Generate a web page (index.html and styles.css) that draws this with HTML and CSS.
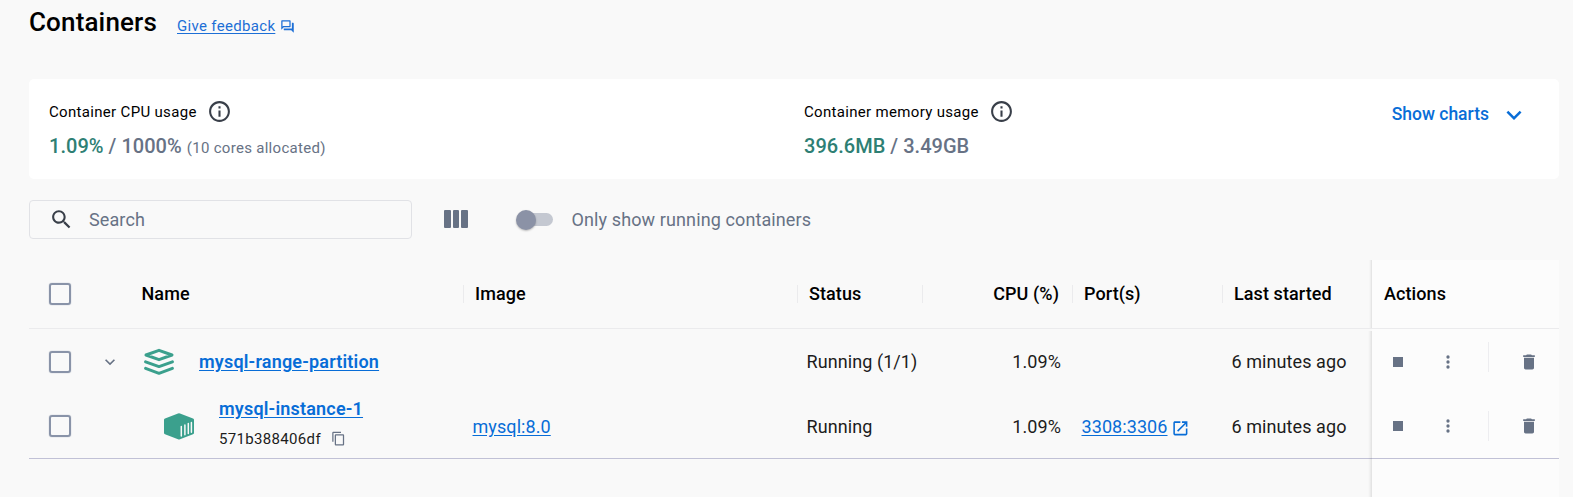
FILE: index.html
```html
<!DOCTYPE html>
<html lang="en">
<head>
<meta charset="utf-8">
<title>Containers</title>
<link rel="stylesheet" href="styles.css">
</head>
<body>
<svg class="defs" width="0" height="0">
  <symbol id="info" viewBox="0 0 24 24"><path d="M11 7h2v2h-2zm0 4h2v6h-2zm1-9C6.48 2 2 6.48 2 12s4.48 10 10 10 10-4.48 10-10S17.52 2 12 2zm0 18c-4.41 0-8-3.59-8-8s3.59-8 8-8 8 3.59 8 8-3.59 8-8 8z"/></symbol>
  <symbol id="down" viewBox="0 0 24 24"><path d="M7.41 8.59 12 13.17l4.59-4.58L18 10l-6 6-6-6z"/></symbol>
  <symbol id="more" viewBox="0 0 24 24"><circle cx="12" cy="6" r="2"/><circle cx="12" cy="12" r="2"/><circle cx="12" cy="18" r="2"/></symbol>
  <symbol id="trash" viewBox="0 0 24 24"><path d="M6 19c0 1.1.9 2 2 2h8c1.1 0 2-.9 2-2V7H6zM19 4h-3.5l-1-1h-5l-1 1H5v2h14z"/></symbol>
  <symbol id="stop" viewBox="0 0 24 24"><path d="M6 6h12v12H6z"/></symbol>
</svg>
<header class="title-bar">
  <h1>Containers</h1>
  <a class="feedback">Give feedback</a>
  <svg class="feedback-icon" viewBox="0 0 24 24"><path d="M15 4v7H5.17L4 12.17V4h11m1-2H3c-.55 0-1 .45-1 1v14l4-4h10c.55 0 1-.45 1-1V3c0-.55-.45-1-1-1zm5 4h-2v9H6v2c0 .55.45 1 1 1h11l4 4V7c0-.55-.45-1-1-1z"/></svg>
</header>
<section class="usage">
  <div class="metric cpu">
    <div class="label">Container CPU usage<svg><use href="#info"/></svg></div>
    <div class="value"><span class="used">1.09%</span> / 1000% <small>(10 cores allocated)</small></div>
  </div>
  <div class="metric">
    <div class="label">Container memory usage<svg><use href="#info"/></svg></div>
    <div class="value"><span class="used">396.6MB</span> / 3.49GB</div>
  </div>
  <a class="charts">Show charts<svg><use href="#down"/></svg></a>
</section>
<section class="toolbar">
  <div class="search">
    <svg viewBox="0 0 24 24"><path d="M15.5 14h-.79l-.28-.27C15.41 12.59 16 11.11 16 9.5 16 5.91 13.09 3 9.5 3S3 5.91 3 9.5 5.91 16 9.5 16c1.61 0 3.09-.59 4.23-1.57l.27.28v.79l5 4.99L20.49 19l-4.99-5zm-6 0C7.01 14 5 11.99 5 9.5S7.01 5 9.5 5 14 7.01 14 9.5 11.99 14 9.5 14z"/></svg>
    <span>Search</span>
  </div>
  <div class="columns"><i></i><i></i><i></i></div>
  <div class="switch"><div class="thumb"></div></div>
  <span class="switch-label">Only show running containers</span>
</section>
<main class="table">
  <div class="row head">
    <div class="cell name"><i class="box"></i><span class="head-name">Name</span></div>
    <div class="cell">Image</div>
    <div class="cell">Status</div>
    <div class="cell num">CPU (%)</div>
    <div class="cell">Port(s)</div>
    <div class="cell">Last started</div>
    <div class="cell pinned">Actions</div>
  </div>
  <div class="row group">
    <div class="cell name"><i class="box"></i><svg class="toggle"><use href="#down"/></svg>
      <svg class="stack" viewBox="0 0 30 28"><g fill="none" stroke="#3ba08d" stroke-width="3" stroke-linecap="round" stroke-linejoin="round"><path d="M15 2.3 28 7 15 11.7 2 7z"/><path d="M1.6 13.8 15 18.6l13.4-4.8"/><path d="M1.6 20.4 15 25.3l13.4-4.9"/></g></svg>
      <a class="link strong">mysql-range-partition</a></div>
    <div class="cell"></div>
    <div class="cell">Running (1/1)</div>
    <div class="cell num">1.09%</div>
    <div class="cell"></div>
    <div class="cell">6 minutes ago</div>
    <div class="cell pinned"><svg class="stop"><use href="#stop"/></svg><svg class="more"><use href="#more"/></svg><i class="rule"></i><svg class="trash"><use href="#trash"/></svg></div>
  </div>
  <div class="row item">
    <div class="cell name"><i class="box"></i>
      <svg class="cube" viewBox="0 0 30 27"><path d="M14 .5q1-.5 2 0L29 5.4q1 .4 1 1.3v13.2q0 .9-1 1.3L16 26.3q-1 .4-2 0L1 21.2q-1-.4-1-1.3V6.7q0-.9 1-1.3z" fill="#3ba08d"/><path d="M17.3 13.5v9.5M20.9 12v9.7M24.3 10.6v9.9M27.4 9.4v9.9" stroke="#f9f9f9" stroke-width="1.5" stroke-linecap="round"/></svg>
      <div class="ident"><a class="link strong">mysql-instance-1</a>
        <div class="hash">571b388406df<svg viewBox="0 0 24 24"><path d="M16 1H4c-1.1 0-2 .9-2 2v14h2V3h12zm3 4H8c-1.1 0-2 .9-2 2v14c0 1.1.9 2 2 2h11c1.1 0 2-.9 2-2V7c0-1.1-.9-2-2-2zm0 16H8V7h11z"/></svg></div></div></div>
    <div class="cell"><a class="link">mysql:8.0</a></div>
    <div class="cell">Running</div>
    <div class="cell num">1.09%</div>
    <div class="cell"><a class="link">3308:3306</a><svg class="open" viewBox="0 0 24 24"><path d="M19 19H5V5h7V3H5c-1.11 0-2 .9-2 2v14c0 1.1.89 2 2 2h14c1.1 0 2-.9 2-2v-7h-2zM14 3v2h3.59l-9.83 9.83 1.41 1.41L19 6.41V10h2V3z"/></svg></div>
    <div class="cell">6 minutes ago</div>
    <div class="cell pinned"><svg class="stop"><use href="#stop"/></svg><svg class="more"><use href="#more"/></svg><i class="rule"></i><svg class="trash"><use href="#trash"/></svg></div>
  </div>
  <div class="row rest"><div class="cell pinned"></div></div>
</main>
</body>
</html>
```
FILE: styles.css
```css
* { box-sizing: border-box; }
body { margin: 0; padding: 0 14px 0 29px; height: 497px; overflow: hidden; display: flex; flex-direction: column; background: #f9f9f9; color: #000; font: 18px/24px Roboto, sans-serif; }
svg { display: block; flex: none; fill: #677285; }
.defs { position: absolute; }

.title-bar { display: flex; height: 79px; padding-top: 4px; align-items: flex-start; }
h1 { margin: 0; font-size: 26px; line-height: 36px; font-weight: 500; width: 148px; letter-spacing: .15px; }
.feedback { margin-top: 10px; font-size: 15px; line-height: 24px; letter-spacing: .32px; color: #1d6fd6; text-decoration: underline; text-underline-offset: 2px; width: 103px; white-space: nowrap; }
.feedback-icon { width: 15px; height: 15px; margin-top: 15px; fill: #1d6fd6; }

.usage { display: flex; height: 100px; padding: 20px; background: #fff; border-radius: 5px; }
.metric.cpu { width: 755px; }
.label { display: flex; align-items: center; height: 25px; gap: 10px; font-size: 15px; letter-spacing: .32px; }
.label svg { width: 25px; height: 25px; fill: #393f49; }
.value { margin-top: 8px; font-size: 20px; line-height: 28px; font-weight: 500; color: #677285; letter-spacing: .03px; white-space: nowrap; }
.used { color: #2e7f74; }
.value small { font-size: 15px; font-weight: 400; letter-spacing: .3px; }
.charts { margin-left: auto; display: flex; height: 30px; gap: 10px; align-items: center; color: #086dd7; font-size: 17.5px; font-weight: 500; margin-right: 10px; }
.charts svg { width: 30px; height: 30px; fill: #086dd7; margin-top: 2px; }

.toolbar { display: flex; align-items: center; height: 39px; margin-top: 21px; color: #677285; letter-spacing: .11px; }
.search { display: flex; align-items: center; gap: 15px; width: 383px; height: 39px; padding-left: 19px; border: 1px solid #e1e2e6; border-radius: 4px; }
.search svg { width: 25px; height: 25px; fill: #393f49; }
.columns { display: flex; gap: 2px; margin-left: 32px; margin-top: -1px; }
.columns i { width: 6.7px; height: 18px; border-radius: 1px; background: #677285; }
.switch { margin-left: 51px; width: 34px; height: 13px; border-radius: 7px; background: #c4c8d1; display: flex; align-items: center; }
.thumb { width: 20px; height: 20px; flex: none; margin-left: -3px; border-radius: 50%; background: #8b92a6; box-shadow: 0 1px 2px rgba(0,0,0,.25); }
.switch-label { margin-left: 18.5px; }

.table { flex: 1; display: flex; flex-direction: column; margin-top: 21px; letter-spacing: .08px; }
.row { display: grid; grid-template-columns: 434px 334px 125px 150px 150px 150px 187px; height: 65px; color: #1c1c1c; }
.row.head { height: 69px; border-bottom: 1px solid #ebebed; color: #000; font-weight: 500; }
.row.item { border-bottom: 1px solid #c1c1d6; }
.row.rest { flex: 1; grid-template-columns: 187px; justify-content: end; }
.cell { display: flex; align-items: center; padding-left: 9.5px; white-space: nowrap; }
.head .cell { padding-left: 12px; background: linear-gradient(#ebebed, #ebebed) -1px 50% / 2px 18px no-repeat; }
.cell.name, .head .cell.name { padding-left: 20px; background: none; }
.cell.num { justify-content: flex-end; padding-right: 11px; }
.head .cell.num { padding-right: 13px; }
.item .cell:not(.name):not(.pinned) { padding-top: 2px; }
.cell.pinned, .head .cell.pinned { position: relative; padding-left: 12px; background: #fcfcfc; }
.pinned::before { content: ""; position: absolute; right: 100%; top: 0; bottom: 0; width: 4px; background: linear-gradient(to left, rgba(0,0,0,.1), rgba(0,0,0,.04) 50%, transparent); }
.group .pinned::before { top: 2px; }
.item .pinned::before { bottom: -1px; }
.head .pinned::before { width: 3px; }
.box { width: 22px; height: 22px; border: 2px solid #8993a8; border-radius: 3px; box-shadow: 0 0 1px #8993a8; }
.head-name { margin-left: 70.5px; }
.toggle { width: 20px; height: 20px; margin-left: 29px; }
.stack { width: 30px; height: 28px; margin-left: 24px; }
.group .strong { margin-left: 25px; }
.cube { width: 30px; height: 27px; margin-left: 93px; }
.ident { margin-left: 25px; margin-top: -5px; }
.link { color: #086dd7; text-decoration: underline; text-underline-offset: 2px; }
.strong { font-weight: 600; letter-spacing: .19px; }
.hash { display: flex; align-items: center; gap: 10px; margin-top: 6px; font-size: 15px; letter-spacing: .33px; }
.hash svg { width: 15px; height: 15px; }
.open { width: 18.75px; height: 18.75px; margin: 3px 0 0 3.5px; fill: #086dd7; }
.stop, .more, .trash { width: 20px; height: 20px; }
.row .stop { margin-left: 4px; }
.more { margin-left: 30px; }
.rule { width: 1px; height: 30px; margin: 0 30px; background: #ededf0; }
.group .rule { margin-bottom: 10px; }
```
